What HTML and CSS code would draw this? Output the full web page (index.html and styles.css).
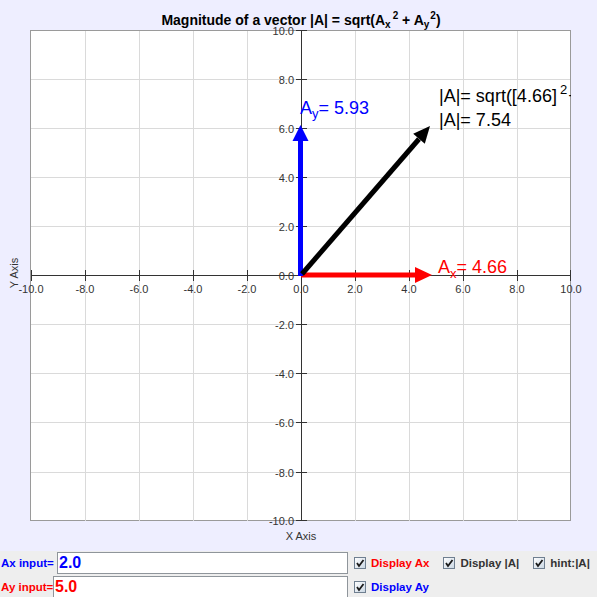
FILE: index.html
```html
<!DOCTYPE html>
<html>
<head>
<meta charset="utf-8">
<title>Magnitude of a vector</title>
<link rel="stylesheet" href="styles.css">
</head>
<body>
<svg class="chart" width="597" height="551" viewBox="0 0 597 551" xmlns="http://www.w3.org/2000/svg">
  <defs>
    <clipPath id="plotclip"><rect x="31" y="30" width="540" height="491"/></clipPath>
    <linearGradient id="cbg" x1="0" y1="0" x2="1" y2="1">
      <stop offset="0" stop-color="#ffffff"/>
      <stop offset="1" stop-color="#c9d6e3"/>
    </linearGradient>
  </defs>
  <text class="title" x="301" y="25" text-anchor="middle">Magnitude of a vector |A| = sqrt(A<tspan class="tsub" dy="3">x</tspan><tspan class="tsub" dx="2" dy="-9">2</tspan><tspan dy="6"> + A</tspan><tspan class="tsub" dy="3">y</tspan><tspan class="tsub" dx="1" dy="-9">2</tspan><tspan dy="6">)</tspan></text>

  <rect class="plot" x="30.5" y="30.5" width="540" height="490"/>

  <g class="grid">
    <line x1="85.5" y1="31" x2="85.5" y2="521"/>
    <line x1="139.5" y1="31" x2="139.5" y2="521"/>
    <line x1="193.5" y1="31" x2="193.5" y2="521"/>
    <line x1="247.5" y1="31" x2="247.5" y2="521"/>
    <line x1="355.5" y1="31" x2="355.5" y2="521"/>
    <line x1="409.5" y1="31" x2="409.5" y2="521"/>
    <line x1="463.5" y1="31" x2="463.5" y2="521"/>
    <line x1="517.5" y1="31" x2="517.5" y2="521"/>
    <line x1="31" y1="79.5" x2="570" y2="79.5"/>
    <line x1="31" y1="128.5" x2="570" y2="128.5"/>
    <line x1="31" y1="177.5" x2="570" y2="177.5"/>
    <line x1="31" y1="226.5" x2="570" y2="226.5"/>
    <line x1="31" y1="324.5" x2="570" y2="324.5"/>
    <line x1="31" y1="373.5" x2="570" y2="373.5"/>
    <line x1="31" y1="422.5" x2="570" y2="422.5"/>
    <line x1="31" y1="472.5" x2="570" y2="472.5"/>
  </g>

  <g class="axis">
    <line x1="31" y1="275.5" x2="571" y2="275.5"/>
    <line x1="301.5" y1="30" x2="301.5" y2="521"/>
    <line x1="31.5" y1="270" x2="31.5" y2="281"/>
    <line x1="85.5" y1="270" x2="85.5" y2="281"/>
    <line x1="139.5" y1="270" x2="139.5" y2="281"/>
    <line x1="193.5" y1="270" x2="193.5" y2="281"/>
    <line x1="247.5" y1="270" x2="247.5" y2="281"/>
    <line x1="355.5" y1="270" x2="355.5" y2="281"/>
    <line x1="409.5" y1="270" x2="409.5" y2="281"/>
    <line x1="463.5" y1="270" x2="463.5" y2="281"/>
    <line x1="517.5" y1="270" x2="517.5" y2="281"/>
    <line x1="570.5" y1="270" x2="570.5" y2="281"/>
    <line x1="296" y1="30.5" x2="307" y2="30.5"/>
    <line x1="296" y1="79.5" x2="307" y2="79.5"/>
    <line x1="296" y1="128.5" x2="307" y2="128.5"/>
    <line x1="296" y1="177.5" x2="307" y2="177.5"/>
    <line x1="296" y1="226.5" x2="307" y2="226.5"/>
    <line x1="296" y1="324.5" x2="307" y2="324.5"/>
    <line x1="296" y1="373.5" x2="307" y2="373.5"/>
    <line x1="296" y1="422.5" x2="307" y2="422.5"/>
    <line x1="296" y1="472.5" x2="307" y2="472.5"/>
    <line x1="296" y1="520.5" x2="307" y2="520.5"/>
  </g>

  <g class="ticklbl">
    <text x="31" y="293" text-anchor="middle">-10.0</text>
    <text x="85" y="293" text-anchor="middle">-8.0</text>
    <text x="139" y="293" text-anchor="middle">-6.0</text>
    <text x="193" y="293" text-anchor="middle">-4.0</text>
    <text x="247" y="293" text-anchor="middle">-2.0</text>
    <text x="301" y="293" text-anchor="middle">0.0</text>
    <text x="355" y="293" text-anchor="middle">2.0</text>
    <text x="409" y="293" text-anchor="middle">4.0</text>
    <text x="463" y="293" text-anchor="middle">6.0</text>
    <text x="517" y="293" text-anchor="middle">8.0</text>
    <text x="571" y="293" text-anchor="middle">10.0</text>

    <text x="294" y="34.5" text-anchor="end">10.0</text>
    <text x="294" y="83.5" text-anchor="end">8.0</text>
    <text x="294" y="132.5" text-anchor="end">6.0</text>
    <text x="294" y="181.5" text-anchor="end">4.0</text>
    <text x="294" y="230.5" text-anchor="end">2.0</text>
    <text x="294" y="279.5" text-anchor="end">0.0</text>
    <text x="294" y="328.5" text-anchor="end">-2.0</text>
    <text x="294" y="377.5" text-anchor="end">-4.0</text>
    <text x="294" y="426.5" text-anchor="end">-6.0</text>
    <text x="294" y="476.5" text-anchor="end">-8.0</text>
    <text x="294" y="524.5" text-anchor="end">-10.0</text>
  </g>

  <text class="axtitle" x="301" y="540" text-anchor="middle">X Axis</text>
  <text class="axtitle" transform="translate(18 273) rotate(-90)" text-anchor="middle">Y Axis</text>

  <g clip-path="url(#plotclip)">
    <rect class="red" x="301" y="272.5" width="115" height="5"/>
    <polygon class="red" points="415,267 432,275 415,283"/>
    <rect class="blue" x="298" y="139" width="5" height="137"/>
    <polygon class="blue" points="292.5,141 308.5,141 300.5,125"/>
    <line class="mag" x1="302" y1="274" x2="419" y2="139"/>
    <polygon class="black" points="430,126 424.8,143.8 413.2,133.8"/>

    <text class="vlbl blue" x="300" y="114">A<tspan class="vsub" dy="4">y</tspan><tspan dy="-4">= 5.93</tspan></text>
    <text class="vlbl red" x="438" y="273">A<tspan class="vsub" dy="5">x</tspan><tspan dy="-5">= 4.66</tspan></text>
    <text class="vlbl black" x="439" y="101.5">|A|= sqrt([4.66]<tspan class="vsub" dx="3" dy="-8">2</tspan><tspan dx="1" dy="8">+[5.93]</tspan></text>
    <text class="vlbl black" x="439" y="125.5">|A|= 7.54</text>
  </g>
</svg>

<div class="controls">
  <div class="row">
    <div class="input-group">
      <span class="in-label in-ax">Ax input=</span>
      <div class="field field-ax">2.0</div>
    </div>
    <div class="checks">
      <span class="cb cb-red"><svg class="box" width="12" height="12" viewBox="0 0 12 12"><rect x="0.5" y="0.5" width="11" height="11" fill="url(#cbg)" stroke="#6f7f90"/><path d="M3 6 L5 9 L9.5 3" fill="none" stroke="#1a1a1a" stroke-width="1.8"/></svg>Display Ax</span>
      <span class="cb cb-dark"><svg class="box" width="12" height="12" viewBox="0 0 12 12"><rect x="0.5" y="0.5" width="11" height="11" fill="url(#cbg)" stroke="#6f7f90"/><path d="M3 6 L5 9 L9.5 3" fill="none" stroke="#1a1a1a" stroke-width="1.8"/></svg>Display |A|</span>
      <span class="cb cb-dark"><svg class="box" width="12" height="12" viewBox="0 0 12 12"><rect x="0.5" y="0.5" width="11" height="11" fill="url(#cbg)" stroke="#6f7f90"/><path d="M3 6 L5 9 L9.5 3" fill="none" stroke="#1a1a1a" stroke-width="1.8"/></svg>hint:|A|</span>
    </div>
  </div>
  <div class="row">
    <div class="input-group">
      <span class="in-label in-ay">Ay input=</span>
      <div class="field field-ay">5.0</div>
    </div>
    <div class="checks">
      <span class="cb cb-blue"><svg class="box" width="12" height="12" viewBox="0 0 12 12"><rect x="0.5" y="0.5" width="11" height="11" fill="url(#cbg)" stroke="#6f7f90"/><path d="M3 6 L5 9 L9.5 3" fill="none" stroke="#1a1a1a" stroke-width="1.8"/></svg>Display Ay</span>
    </div>
  </div>
</div>
</body>
</html>
```

FILE: styles.css
```css
html, body {
  margin: 0;
  padding: 0;
}
body {
  width: 597px;
  height: 597px;
  overflow: hidden;
  background: #eeeeff;
  font-family: "Liberation Sans", Arial, sans-serif;
}
.chart {
  display: block;
}
.title {
  font-family: "Liberation Sans", Arial, sans-serif;
  font-weight: bold;
  font-size: 14px;
  fill: #000;
}
.tsub {
  font-size: 10px;
}
.plot {
  fill: #ffffff;
  stroke: #9a9a9a;
  stroke-width: 1;
}
.grid line {
  stroke: #dadada;
  stroke-width: 1;
}
.axis line {
  stroke: #333333;
  stroke-width: 1;
}
.ticklbl text {
  font-family: "Liberation Sans", Arial, sans-serif;
  font-size: 11px;
  fill: #333333;
}
.axtitle {
  font-family: "Liberation Sans", Arial, sans-serif;
  font-size: 11px;
  fill: #333333;
}
.red { fill: #ff0000; }
.blue { fill: #0000ff; }
.black { fill: #000000; }
.mag {
  stroke: #000000;
  stroke-width: 5;
}
.vlbl {
  font-family: "Liberation Sans", Arial, sans-serif;
  font-size: 18px;
}
.vsub {
  font-size: 13px;
}

.controls {
  background: #eeeeee;
  height: 46px;
  display: flex;
  flex-direction: column;
  gap: 2px;
  padding-top: 1px;
}
.row {
  display: flex;
  align-items: center;
  height: 22px;
}
.input-group {
  width: 348px;
  display: flex;
  align-items: center;
  height: 100%;
}
.in-label {
  font-weight: bold;
  font-size: 11.5px;
  padding-left: 1px;
  box-sizing: border-box;
  white-space: nowrap;
}
.in-ax {
  width: 57px;
  color: #0000ff;
}
.in-ay {
  width: 53px;
  color: #ff0000;
}
.field {
  flex: 1;
  height: 22px;
  box-sizing: border-box;
  border: 1px solid #8f959b;
  background: #ffffff;
  font-weight: bold;
  font-size: 16px;
  line-height: 20px;
  padding-left: 1px;
}
.field-ax { color: #0000ff; }
.field-ay { color: #ff0000; }
.checks {
  display: flex;
  align-items: center;
  gap: 14px;
  margin-left: 6px;
}
.cb {
  display: flex;
  align-items: center;
  gap: 5px;
  font-weight: bold;
  font-size: 11.5px;
  white-space: nowrap;
}
.box {
  display: block;
}
.cb-red { color: #ff0000; }
.cb-blue { color: #0000ff; }
.cb-dark { color: #333333; }
```
